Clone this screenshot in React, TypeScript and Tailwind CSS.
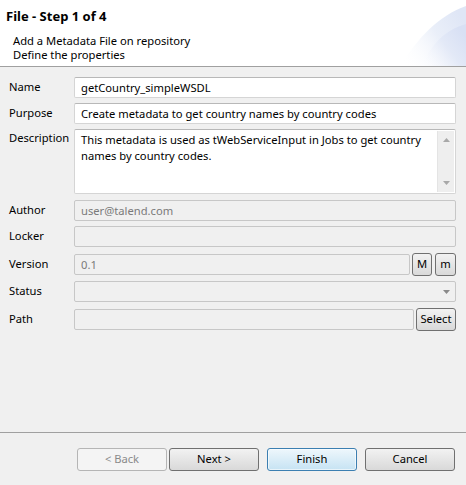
import React from "react";

const font = { fontFamily: '"Noto Sans", "Open Sans", sans-serif' };

function Field({ value, disabled, className = "" }: { value?: string; disabled?: boolean; className?: string }) {
  return (
    <div
      className={
        "h-[21px] flex items-center px-[6px] text-[11.2px] border rounded-[2px] " +
        (disabled
          ? "bg-[#f0f0f0] border-[#c7c7c7] text-[#7a7a7a] "
          : "bg-white border-[#d5d5d5] border-t-[#b8b8b8] text-[#000] ") +
        className
      }
    >
      <span className="whitespace-nowrap leading-none">{value}</span>
    </div>
  );
}

function SmallButton({ label, className = "" }: { label: string; className?: string }) {
  return (
    <div
      className={
        "h-[23px] flex items-center justify-center text-[11.2px] text-black border border-[#707070] rounded-[3px] bg-gradient-to-b from-[#f2f2f2] to-[#d9d9d9] " +
        className
      }
    >
      {label}
    </div>
  );
}

function Row({ label, children, className = "" }: { label: string; children: React.ReactNode; className?: string }) {
  return (
    <div className={"flex items-center " + className}>
      <div className="w-[74px] text-[11.2px] text-black pl-[9px] shrink-0">{label}</div>
      <div className="flex-1 min-w-0 flex items-center">{children}</div>
    </div>
  );
}

export default function App() {
  return (
    <div className="w-[466px] h-[485px] bg-[#f0f0f0] flex flex-col overflow-hidden" style={font}>
      {/* header */}
      <div className="relative h-[67px] bg-white border-b border-[#a0a0a0] shrink-0">
        <svg className="absolute right-0 top-0" width="70" height="66" viewBox="0 0 70 66">
          <defs>
            <linearGradient id="g1" x1="0" y1="0.9" x2="1" y2="0.3">
              <stop offset="0" stopColor="#ffffff" stopOpacity="0" />
              <stop offset="0.6" stopColor="#eaeff9" />
              <stop offset="1" stopColor="#dfe6f6" />
            </linearGradient>
            <linearGradient id="g2" x1="0" y1="1" x2="1" y2="0.3">
              <stop offset="0" stopColor="#ffffff" stopOpacity="0" />
              <stop offset="0.6" stopColor="#e3e9f7" />
              <stop offset="1" stopColor="#d8e0f4" />
            </linearGradient>
          </defs>
          <path d="M4 66 C 22 38, 42 16, 70 6 L 70 66 Z" fill="url(#g1)" />
          <path d="M26 66 C 35 45, 48 30, 70 24 L 70 66 Z" fill="url(#g2)" />
        </svg>
        <div className="absolute left-[6px] top-[8px] text-[13px] font-bold text-black leading-[17px]">File - Step 1 of 4</div>
        <div className="absolute left-[13px] top-[34px] text-[11.2px] text-black leading-[14px]">
          <div>Add a Metadata File on repository</div>
          <div>Define the properties</div>
        </div>
      </div>

      {/* body */}
      <div className="flex-1 flex flex-col pr-[10px] pt-[10px]">
        <Row label="Name" className="h-[21px]">
          <Field value="getCountry_simpleWSDL" className="flex-1" />
        </Row>
        <Row label="Purpose" className="h-[21px] mt-[5px]">
          <Field value="Create metadata to get country names by country codes" className="flex-1" />
        </Row>
        <div className="flex mt-[5px] h-[65px]">
          <div className="w-[74px] text-[11.2px] text-black pl-[9px] pt-[1px] shrink-0">Description</div>
          <div className="flex-1 flex bg-white border border-[#d5d5d5] border-t-[#b8b8b8] rounded-[2px]">
            <div className="flex-1 text-[11.2px] leading-[16px] text-black pl-[6px] pt-[2px]">
              This metadata is used as tWebServiceInput in Jobs to get country
              <br />
              names by country codes.
            </div>
            <div className="w-[17px] my-[1px] mr-[1px] bg-[#eeeeee] border-l border-[#e4e4e4] flex flex-col items-center justify-between py-[7px]">
              <svg width="7" height="4" viewBox="0 0 7 4"><path d="M0 4 L3.5 0 L7 4 Z" fill="#a8a8a8" /></svg>
              <svg width="7" height="4" viewBox="0 0 7 4"><path d="M0 0 L3.5 4 L7 0 Z" fill="#a8a8a8" /></svg>
            </div>
          </div>
        </div>
        <Row label="Author" className="h-[21px] mt-[6px]">
          <Field value="user@talend.com" disabled className="flex-1" />
        </Row>
        <Row label="Locker" className="h-[21px] mt-[5px]">
          <Field disabled className="flex-1" />
        </Row>
        <Row label="Version" className="h-[23px] mt-[6px]">
          <Field value="0.1" disabled className="flex-1" />
          <SmallButton label="M" className="w-[20px] ml-[2px]" />
          <SmallButton label="m" className="w-[21px] ml-[3px]" />
        </Row>
        <Row label="Status" className="h-[21px] mt-[5px]">
          <div className="flex-1 h-[21px] flex bg-[#f0f0f0] border border-[#c7c7c7] rounded-[2px]">
            <div className="flex-1" />
            <div className="w-[17px] flex items-center justify-center">
              <svg width="7" height="4" viewBox="0 0 7 4"><path d="M0 0 L3.5 4 L7 0 Z" fill="#8a8a8a" /></svg>
            </div>
          </div>
        </Row>
        <Row label="Path" className="h-[23px] mt-[6px]">
          <Field disabled className="flex-1" />
          <SmallButton label="Select" className="w-[40px] ml-[2px]" />
        </Row>
      </div>

      {/* footer */}
      <div className="h-[53px] border-t border-[#a0a0a0] shrink-0 flex justify-end items-start pt-[15px] pr-[11px]">
        <div className="w-[90px] h-[23px] flex items-center justify-center text-[11.2px] text-[#8a8a8a] border border-[#b5b5b5] rounded-[3px] bg-[#f4f4f4]">&lt; Back</div>
        <SmallButton label="Next >" className="w-[90px] ml-[2px]" />
        <div className="w-[90px] h-[23px] ml-[8px] flex items-center justify-center text-[11.2px] text-black border border-[#3c7fb1] rounded-[3px] bg-gradient-to-b from-[#eef7fc] to-[#c6e3f3] shadow-[inset_0_0_0_1px_rgba(255,255,255,0.6)]">Finish</div>
        <SmallButton label="Cancel" className="w-[90px] ml-[8px]" />
      </div>
    </div>
  );
}
